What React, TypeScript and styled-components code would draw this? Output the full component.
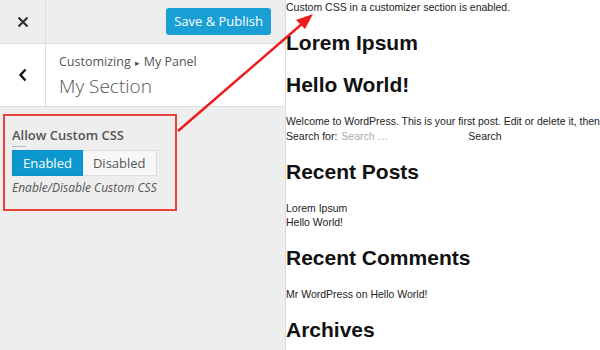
import React, { FC } from 'react';
import styled, { createGlobalStyle } from 'styled-components';

const GlobalStyle = createGlobalStyle`
  html, body { margin: 0; padding: 0; background: #fff; }
  body { width: 600px; height: 350px; overflow: hidden; }
`;

const Page = styled.div`
  position: relative;
  display: flex;
  width: 600px;
  height: 350px;
  overflow: hidden;
`;

// ---- customizer sidebar ----
const Sidebar = styled.aside`
  width: 285px;
  flex: none;
  display: flex;
  flex-direction: column;
  background: #eee;
  border-right: 1px solid #ddd;
  font-family: "Open Sans", "Liberation Sans", sans-serif;
  color: #555;
`;

const Header = styled.header`
  height: 43px;
  display: flex;
  align-items: center;
  border-bottom: 1px solid #ddd;
`;

const IconCell = styled.div`
  width: 45px;
  height: 100%;
  flex: none;
  display: flex;
  align-items: center;
  justify-content: center;
  border-right: 1px solid #ddd;
`;

const SaveButton = styled.button`
  margin-left: auto;
  margin-right: 14px;
  height: 27px;
  padding: 0 8px;
  border: 0;
  border-radius: 3px;
  background: #1a9fd5;
  color: #fff;
  font-family: inherit;
  font-size: 13px;
  line-height: 27px;
`;

const SectionHead = styled.div`
  height: 62px;
  display: flex;
  background: #fff;
  border-bottom: 1px solid #ddd;
`;

const Titles = styled.div`
  padding: 9px 0 0 13px;
`;

const Crumb = styled.div`
  font-size: 12.5px;
  line-height: 18px;
  color: #555;
`;

const Caret = styled.span`
  font-size: 9px;
  margin: 0 4px;
`;

const SectionTitle = styled.div`
  font-size: 19px;
  font-weight: 300;
  line-height: 28px;
  color: #555;
`;

const Body = styled.div`
  padding: 7px 0 0 3px;
`;

const Highlight = styled.div`
  box-sizing: border-box;
  width: 174px;
  height: 97px;
  border: 2px solid #e8423b;
  padding: 10px 0 0 7px;
`;

const ControlTitle = styled.div`
  font-size: 13px;
  font-weight: 600;
  line-height: 19px;
  color: #555;
  &::after {
    content: '';
    display: block;
    width: 14px;
    height: 1px;
    margin-top: 1px;
    background: #bbb;
  }
`;

const Toggle = styled.div`
  display: flex;
  margin-top: 3px;
`;

const ToggleButton = styled.button<{ $on?: boolean }>`
  height: 26px;
  padding: 0 10px;
  font-family: inherit;
  font-size: 13px;
  line-height: 24px;
  border: 1px solid ${p => (p.$on ? '#0a90c6' : '#ddd')};
  border-left-width: ${p => (p.$on ? '1px' : '0')};
  background: ${p => (p.$on ? '#0c98cf' : '#f7f7f7')};
  color: ${p => (p.$on ? '#fff' : '#555')};
`;

const Hint = styled.div`
  margin-top: 3px;
  font-size: 12px;
  font-style: italic;
  line-height: 18px;
  color: #555;
`;

// ---- front end preview ----
const Preview = styled.main`
  flex: 1;
  min-width: 0;
  overflow: hidden;
  font-family: "Liberation Sans", Arial, sans-serif;
  color: #222;
  background: #fff;
`;

const Note = styled.p`
  margin: 0;
  font-size: 10.5px;
  line-height: 14px;
`;

const Heading = styled.h2`
  margin: 16px 0;
  font-size: 21px;
  font-weight: 700;
  line-height: 26px;
  color: #111;
  white-space: nowrap;
`;

const PostTitle = styled(Heading)`
  margin-bottom: 15px;
`;

const Text = styled.p`
  margin: 0;
  font-size: 10.5px;
  line-height: 16px;
  white-space: nowrap;
`;

const SearchForm = styled.div`
  font-size: 10.5px;
  line-height: 14px;
  white-space: nowrap;
`;

const Placeholder = styled.span`
  color: #aaa;
  margin-left: 4px;
  display: inline-block;
  width: 127px;
`;

const List = styled.ul`
  margin: 0;
  padding: 0;
  list-style: none;
  font-size: 10.5px;
  line-height: 14px;
`;

const Arrow: FC = () => (
  <svg
    width="600"
    height="350"
    style={{ position: 'absolute', left: 0, top: 0, pointerEvents: 'none' }}
  >
    <line x1="178" y1="131" x2="303" y2="23" stroke="#ee1c1c" strokeWidth="2.5" />
    <polygon points="313,14 296,20 305,29" fill="#ee1c1c" />
  </svg>
);

export default function App() {
  return (
    <Page>
      <GlobalStyle />
      <Sidebar>
        <Header>
          <IconCell>
            <svg width="12" height="12" viewBox="0 0 12 12">
              <path d="M1.5 1.5 L10.5 10.5 M10.5 1.5 L1.5 10.5" stroke="#333" strokeWidth="2.2" />
            </svg>
          </IconCell>
          <SaveButton>Save &amp; Publish</SaveButton>
        </Header>
        <SectionHead>
          <IconCell>
            <svg width="10" height="14" viewBox="0 0 10 14">
              <path d="M7.5 1.5 L2.5 7 L7.5 12.5" stroke="#111" strokeWidth="2.4" fill="none" />
            </svg>
          </IconCell>
          <Titles>
            <Crumb>
              Customizing<Caret>▸</Caret>My Panel
            </Crumb>
            <SectionTitle>My Section</SectionTitle>
          </Titles>
        </SectionHead>
        <Body>
          <Highlight>
            <ControlTitle>Allow Custom CSS</ControlTitle>
            <Toggle>
              <ToggleButton $on>Enabled</ToggleButton>
              <ToggleButton>Disabled</ToggleButton>
            </Toggle>
            <Hint>Enable/Disable Custom CSS</Hint>
          </Highlight>
        </Body>
      </Sidebar>
      <Preview>
        <Note>Custom CSS in a customizer section is enabled.</Note>
        <Heading>Lorem Ipsum</Heading>
        <PostTitle>Hello World!</PostTitle>
        <Text>Welcome to WordPress. This is your first post. Edit or delete it, then</Text>
        <SearchForm>
          Search for:<Placeholder>Search …</Placeholder>Search
        </SearchForm>
        <Heading>Recent Posts</Heading>
        <List>
          <li>Lorem Ipsum</li>
          <li>Hello World!</li>
        </List>
        <Heading>Recent Comments</Heading>
        <List>
          <li>Mr WordPress on Hello World!</li>
        </List>
        <Heading>Archives</Heading>
      </Preview>
      <Arrow />
    </Page>
  );
}
